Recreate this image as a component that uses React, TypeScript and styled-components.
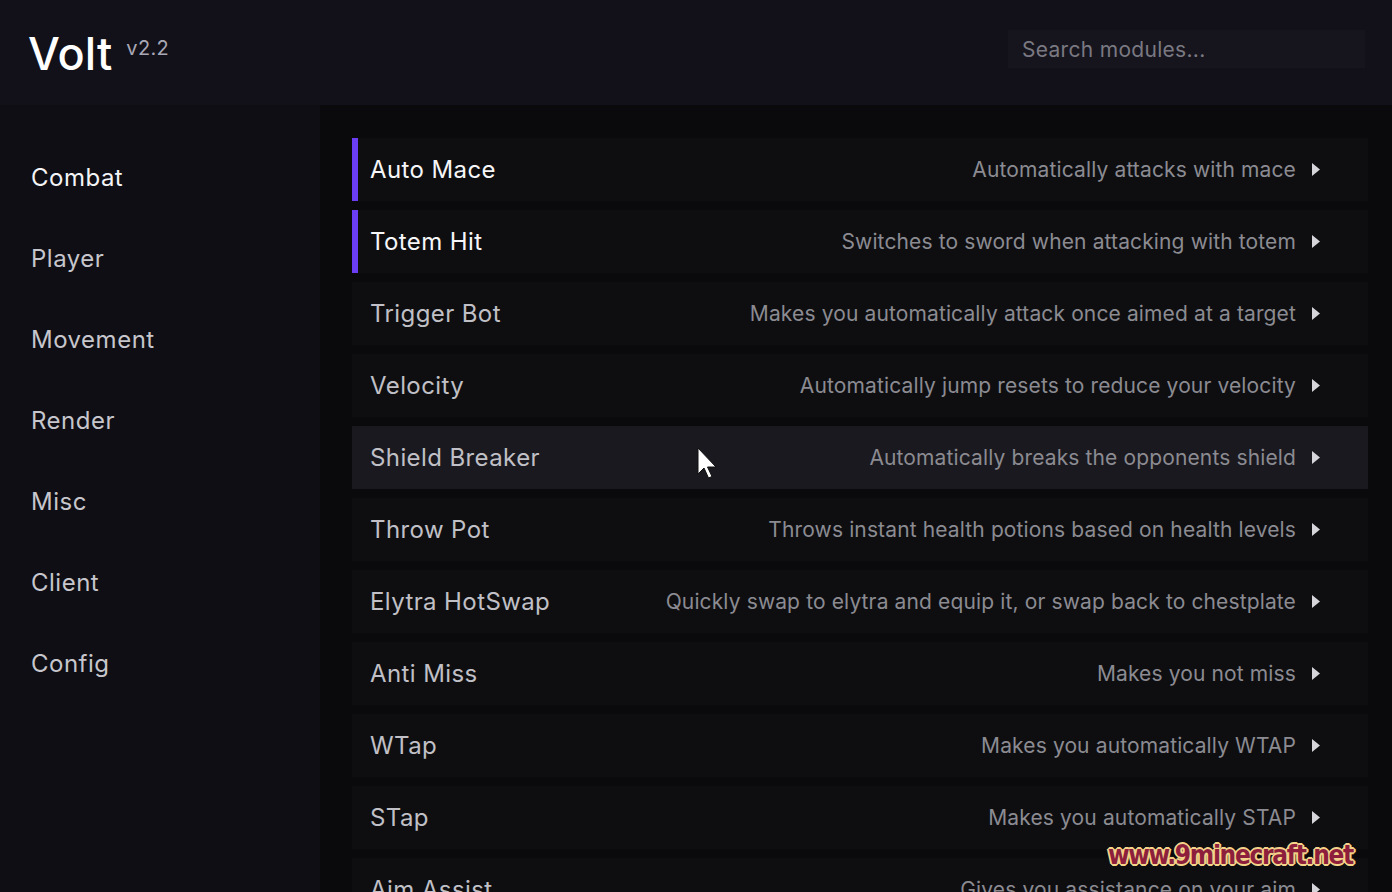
import * as React from 'react'
import styled, { createGlobalStyle } from 'styled-components'

const GlobalStyle = createGlobalStyle`
  html, body {
    margin: 0;
    padding: 0;
    background: #0a0a0c;
    font-family: Inter, "Noto Sans", sans-serif;
    overflow: hidden;
  }
  * { box-sizing: border-box; }
`

const Page = styled.div`
  position: relative;
  width: 1392px;
  height: 892px;
  display: flex;
  flex-direction: column;
  overflow: hidden;
`

const Header = styled.header`
  height: 105px;
  flex-shrink: 0;
  background: #121119;
  display: flex;
  align-items: flex-start;
  justify-content: space-between;
  padding: 0 27px 0 28px;
`

const Brand = styled.div`
  display: flex;
  align-items: flex-start;
  gap: 14px;
  padding-top: 28px;
`

const Logo = styled.span`
  font-size: 45px;
  font-weight: 500;
  color: #ffffff;
  line-height: 52px;
  letter-spacing: 0.1px;
`

const Version = styled.span`
  font-size: 20px;
  color: #a9a8b6;
  margin-top: 8px;
  letter-spacing: 0.3px;
`

const Search = styled.input`
  margin-top: 30px;
  width: 357px;
  height: 38px;
  background: #16151d;
  border: none;
  outline: none;
  padding: 0 14px;
  font-family: Inter, "Noto Sans", sans-serif;
  font-size: 21px;
  letter-spacing: 0.3px;
  color: #d0d0d8;
  &::placeholder {
    color: #7a7982;
  }
`

const Body = styled.div`
  flex: 1;
  display: flex;
  min-height: 0;
`

const Sidebar = styled.nav`
  width: 320px;
  flex-shrink: 0;
  background: #0f0e14;
  display: flex;
  flex-direction: column;
  padding: 58px 0 0 31px;
`

const NavItem = styled.div<{ $active?: boolean }>`
  height: 81px;
  font-size: 24px;
  line-height: 30px;
  letter-spacing: 0.5px;
  color: ${p => (p.$active ? '#f4f4f6' : '#c6c6cc')};
`

const Main = styled.main`
  flex: 1;
  background: #0a0a0c;
  padding: 33px 24px 0 32px;
  display: flex;
  flex-direction: column;
  gap: 9px;
`

const Row = styled.div<{ $hover?: boolean }>`
  height: 63px;
  flex-shrink: 0;
  display: flex;
  align-items: center;
  background: ${p => (p.$hover ? '#1a191f' : '#0e0e11')};
  padding-right: 48px;
`

const Accent = styled.div<{ $on?: boolean }>`
  width: 6px;
  align-self: stretch;
  background: ${p => (p.$on ? '#6b3df5' : 'transparent')};
  margin-right: 12px;
`

const Name = styled.span<{ $on?: boolean }>`
  font-size: 24px;
  letter-spacing: 0.4px;
  color: ${p => (p.$on ? '#f6f6f8' : '#c0c0c6')};
  white-space: nowrap;
`

const Desc = styled.span`
  margin-left: auto;
  font-size: 21px;
  letter-spacing: 0.13px;
  color: #8b8b91;
  white-space: nowrap;
`

const Chevron = styled.svg`
  margin-left: 16px;
  width: 8px;
  height: 13px;
  flex-shrink: 0;
`

const Cursor = styled.svg`
  position: absolute;
  left: 697px;
  top: 447px;
  width: 24px;
  height: 36px;
`

const Watermark = styled.div`
  position: absolute;
  left: 1108px;
  top: 840px;
  font-family: "DejaVu Sans Condensed", "Liberation Sans Narrow", sans-serif;
  font-weight: 700;
  font-size: 26px;
  letter-spacing: -1.3px;
  color: #8d1f3c;
  text-shadow: 1px 1px 0 #f3d38a, -1px -1px 0 #f3d38a, 1px -1px 0 #f3d38a, -1px 1px 0 #f3d38a,
    2px 0 0 #f3d38a, -2px 0 0 #f3d38a, 0 2px 0 #f3d38a, 0 -2px 0 #f3d38a;
`

const categories = ['Combat', 'Player', 'Movement', 'Render', 'Misc', 'Client', 'Config']

const modules = [
  { name: 'Auto Mace', desc: 'Automatically attacks with mace', on: true },
  { name: 'Totem Hit', desc: 'Switches to sword when attacking with totem', on: true },
  { name: 'Trigger Bot', desc: 'Makes you automatically attack once aimed at a target' },
  { name: 'Velocity', desc: 'Automatically jump resets to reduce your velocity' },
  { name: 'Shield Breaker', desc: 'Automatically breaks the opponents shield', hover: true },
  { name: 'Throw Pot', desc: 'Throws instant health potions based on health levels' },
  { name: 'Elytra HotSwap', desc: 'Quickly swap to elytra and equip it, or swap back to chestplate' },
  { name: 'Anti Miss', desc: 'Makes you not miss' },
  { name: 'WTap', desc: 'Makes you automatically WTAP' },
  { name: 'STap', desc: 'Makes you automatically STAP' },
  { name: 'Aim Assist', desc: 'Gives you assistance on your aim' },
]

export default function App() {
  return (
    <Page>
      <GlobalStyle />
      <Header>
        <Brand>
          <Logo>Volt</Logo>
          <Version>v2.2</Version>
        </Brand>
        <Search placeholder="Search modules..." />
      </Header>
      <Body>
        <Sidebar>
          {categories.map((c, i) => (
            <NavItem key={c} $active={i === 0}>{c}</NavItem>
          ))}
        </Sidebar>
        <Main>
          {modules.map(m => (
            <Row key={m.name} $hover={m.hover}>
              <Accent $on={m.on} />
              <Name $on={m.on}>{m.name}</Name>
              <Desc>{m.desc}</Desc>
              <Chevron viewBox="0 0 8 13">
                <path d="M0 0 L8 6.5 L0 13 Z" fill="#d6d6da" />
              </Chevron>
            </Row>
          ))}
        </Main>
      </Body>
      <Cursor viewBox="0 0 24 36">
        <path d="M1 1 L1 27 L7 21 L11.5 31 L15 29.5 L10.5 20 L19 20 Z" fill="#ffffff" stroke="#111" strokeWidth="1" />
      </Cursor>
      <Watermark>www.9minecraft.net</Watermark>
    </Page>
  )
}
